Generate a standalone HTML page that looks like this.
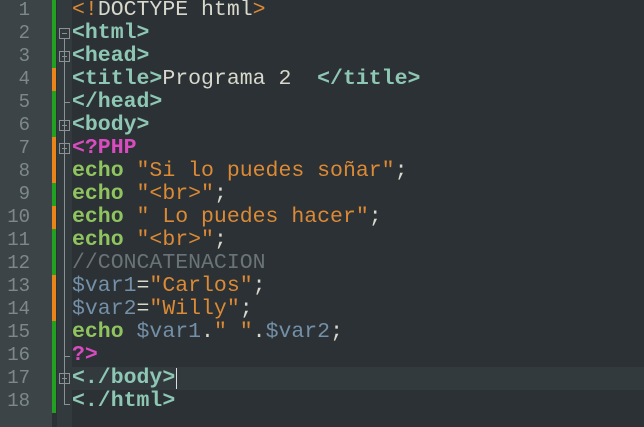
<!DOCTYPE html>
<html><head><style>
body{margin:0;width:644px;height:427px;overflow:hidden;background:#2b3134;font-family:"Liberation Mono",monospace;}
#ln{position:absolute;left:0;top:0;width:52px;height:427px;background:#3c4447;}
#fm{position:absolute;left:57px;top:0;width:15px;height:427px;background:#333a3d;}
.hl{position:absolute;left:72px;top:367px;width:572px;height:23px;background:#323a3d;}
.row{position:absolute;left:0;height:23px;line-height:23px;width:644px;}
.n{position:absolute;left:0;width:30px;text-align:right;color:#7e888c;font-size:19px;}
.bar{position:absolute;left:52px;width:4px;height:23px;}
.t{position:absolute;left:72px;font-size:21.5px;color:#d8d8cc;white-space:pre;}
.g{background:#22a022}.o{background:#e8841a}
.tag{color:#8ec7b3;font-weight:bold}
.e{color:#8fc45f;font-weight:bold}
.s{color:#dc8a35}
.c{color:#6a7478}
.v{color:#7390a8}
.p{color:#d84cc0;font-weight:bold}
.box{position:absolute;left:59px;width:9px;height:9px;border:1px solid #8a9296;}
.box:after{content:"";position:absolute;left:2px;top:4px;width:5px;height:1px;background:#8a9296}
.vl{position:absolute;left:64px;width:1px;background:#8a9296}
.hk{position:absolute;left:64px;width:6px;height:1px;background:#8a9296}
.cur{position:absolute;left:176px;top:368px;width:1px;height:21px;background:#ddd}
</style></head><body>
<div id="ln"></div><div id="fm"></div><div class="hl"></div>
<div class="row" style="top:-1px"><span class="n">1</span><span class="bar g"></span><span class="t"><span class="s">&lt;!</span>DOCTYPE html<span class="s">&gt;</span></span></div>
<div class="row" style="top:22px"><span class="n">2</span><span class="bar g"></span><span class="t tag">&lt;html&gt;</span></div>
<div class="row" style="top:45px"><span class="n">3</span><span class="bar g"></span><span class="t tag">&lt;head&gt;</span></div>
<div class="row" style="top:68px"><span class="n">4</span><span class="bar o"></span><span class="t"><span class="tag">&lt;title&gt;</span>Programa 2  <span class="tag">&lt;/title&gt;</span></span></div>
<div class="row" style="top:91px"><span class="n">5</span><span class="bar g"></span><span class="t tag">&lt;/head&gt;</span></div>
<div class="row" style="top:114px"><span class="n">6</span><span class="bar g"></span><span class="t tag">&lt;body&gt;</span></div>
<div class="row" style="top:137px"><span class="n">7</span><span class="bar o"></span><span class="t p">&lt;?PHP</span></div>
<div class="row" style="top:160px"><span class="n">8</span><span class="bar o"></span><span class="t"><span class="e">echo</span> <span class="s">"Si lo puedes soñar"</span>;</span></div>
<div class="row" style="top:183px"><span class="n">9</span><span class="bar g"></span><span class="t"><span class="e">echo</span> <span class="s">"&lt;br&gt;"</span>;</span></div>
<div class="row" style="top:206px"><span class="n">10</span><span class="bar o"></span><span class="t"><span class="e">echo</span> <span class="s">" Lo puedes hacer"</span>;</span></div>
<div class="row" style="top:229px"><span class="n">11</span><span class="bar g"></span><span class="t"><span class="e">echo</span> <span class="s">"&lt;br&gt;"</span>;</span></div>
<div class="row" style="top:252px"><span class="n">12</span><span class="bar g"></span><span class="t c">//CONCATENACION</span></div>
<div class="row" style="top:275px"><span class="n">13</span><span class="bar o"></span><span class="t"><span class="v">$var1</span>=<span class="s">"Carlos"</span>;</span></div>
<div class="row" style="top:298px"><span class="n">14</span><span class="bar o"></span><span class="t"><span class="v">$var2</span>=<span class="s">"Willy"</span>;</span></div>
<div class="row" style="top:321px"><span class="n">15</span><span class="bar g"></span><span class="t"><span class="e">echo</span> <span class="v">$var1</span>.<span class="s">" "</span>.<span class="v">$var2</span>;</span></div>
<div class="row" style="top:344px"><span class="n">16</span><span class="bar g"></span><span class="t p">?&gt;</span></div>
<div class="row" style="top:367px"><span class="n">17</span><span class="bar g"></span><span class="t tag">&lt;./body&gt;</span></div>
<div class="row" style="top:390px"><span class="n">18</span><span class="bar g"></span><span class="t tag">&lt;./html&gt;</span></div>
<div class="vl" style="top:38px;height:366px"></div>
<div class="box" style="top:28px"></div>
<div class="box" style="top:51px"></div>
<div class="hk" style="top:102px"></div>
<div class="box" style="top:120px"></div>
<div class="box" style="top:143px"></div>
<div class="hk" style="top:356px"></div>
<div class="box" style="top:373px"></div>
<div class="hk" style="top:404px"></div>
<div class="cur"></div>
</body></html>
